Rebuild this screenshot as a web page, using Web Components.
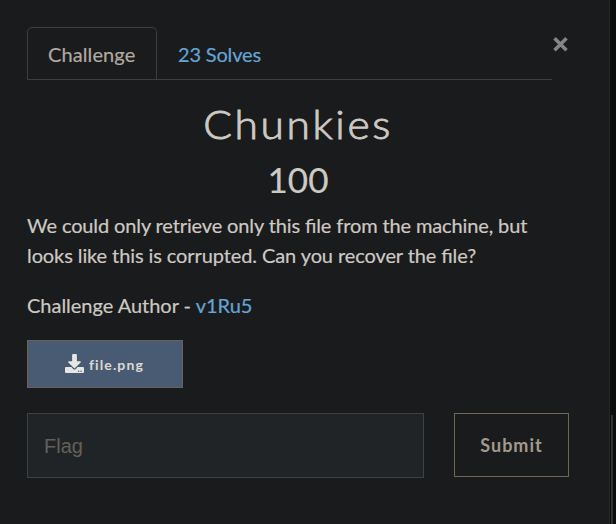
<!DOCTYPE html>
<html lang="en"><head><meta charset="utf-8"><title>Chunkies</title>
<style>html,body{margin:0;height:524px;overflow:hidden;background:#1a1b1c}</style></head><body>
<challenge-modal></challenge-modal>
<script>
function define(name, html){
  const t=document.createElement('template');t.innerHTML=html;
  customElements.define(name,class extends HTMLElement{
    constructor(){super();this.attachShadow({mode:'open'}).append(t.content.cloneNode(true));}
  });
}
define('tab-item',`<style>
:host{display:block;box-sizing:border-box;height:52px;padding:11px 20px 0;border:1px solid transparent;border-bottom:0;line-height:30px;letter-spacing:-.17px;color:#65a5d6;white-space:nowrap;-webkit-text-stroke:.2px}
:host([active]){width:130px;letter-spacing:.1px;color:#b1aaa0;border-color:#3c3e40;border-radius:5px 5px 0 0}
</style><slot></slot>`);
define('tab-bar',`<style>
:host{display:flex;box-sizing:border-box;width:525px;height:53px;border-bottom:1px solid #3c3e40}
</style><slot></slot>`);
define('close-button',`<style>:host{display:block;width:17px;height:53px}svg{display:block;margin-top:9px}</style>
<svg width="17" height="17" viewBox="0 0 17 17"><path d="M2.500 2.200 14.500 14.200M14.500 2.200 2.500 14.200" stroke="#858585" stroke-width="3.600"/></svg>`);
define('file-button',`<style>
:host{display:flex;box-sizing:border-box;width:156px;height:48px;margin-top:20px;border:1px solid #6b6255;background:#495b73;color:#dcd9d4;padding-left:37px;align-items:center;font:700 14px/20px Lato,sans-serif;letter-spacing:1.1px}
svg{margin:-2px 5px 0 0;flex:none}span{padding-top:2px}
</style><svg width="19" height="19" viewBox="0 0 512 512"><path fill="#e8e6e3" d="M216 0h80c13.300 0 24 10.700 24 24v168h87.700c17.800 0 26.700 21.500 14.100 34.100L269.700 378.300c-7.500 7.500-19.800 7.500-27.300 0L90.100 226.100c-12.600-12.600-3.700-34.100 14.100-34.100H192V24c0-13.300 10.700-24 24-24zm296 376v112c0 13.300-10.700 24-24 24H24c-13.300 0-24-10.700-24-24V376c0-13.300 10.700-24 24-24h146.700l49 49c20.100 20.100 52.500 20.100 72.600 0l49-49H488c13.300 0 24 10.700 24 24zm-124 88c0-11-9-20-20-20s-20 9-20 20 9 20 20 20 20-9 20-20zm64 0c0-11-9-20-20-20s-20 9-20 20 9 20 20 20 20-9 20-20z"/></svg><span><slot></slot></span>`);
define('flag-field',`<style>
:host{display:flex;box-sizing:border-box;width:397px;height:65px;padding:0 16px;border:1px solid #3c4144;background:#202426;align-items:center;color:#64605a;font:20px/30px "Liberation Sans",sans-serif}
</style><slot></slot>`);
define('submit-button',`<style>
:host{display:flex;box-sizing:border-box;width:115px;height:64px;border:1px solid #706655;align-items:center;justify-content:center;color:#a39a8c;font:700 18px/30px Lato,sans-serif;letter-spacing:1px}
</style><slot></slot>`);
define('scroll-track',`<style>
:host{display:block;box-sizing:border-box;width:7px;height:524px;padding:415px 0 0 1px;background:#0c0d0d;border-left:1px solid #242627}
div{height:109px;width:2px;background:#303233}
</style><div></div>`);
define('challenge-modal',`<style>
:host{display:flex;justify-content:space-between;height:524px;background:#1a1b1c;font:20px/30px Lato,sans-serif;color:#cdc9c3}
main{width:542px;padding:27px 0 0 27px}
header,footer{display:flex}
h2,h3,p{margin:0;font-weight:400}
h2{font-size:39px;font-weight:300;-webkit-text-stroke:.9px;line-height:48px;letter-spacing:2.400px;margin-top:20px;text-align:center;transform:scaleX(1.090)}
h3{font-size:35px;line-height:42px;margin:10px 0 10px;text-align:center;-webkit-text-stroke:.2px}
p{font-feature-settings:"liga" 1;letter-spacing:-.125px;white-space:nowrap;-webkit-text-stroke:.2px}
span{letter-spacing:-.095px}
p+p{margin-top:20px;letter-spacing:-.02px}a{color:#65a5d6}
footer{margin-top:25px;justify-content:space-between;align-items:flex-start}
</style><main>
<header><tab-bar><tab-item active>Challenge</tab-item><tab-item>23 Solves</tab-item></tab-bar><close-button></close-button></header>
<h2>Chunkies</h2><h3>100</h3>
<p>We could only retrieve only this file from the machine, but<br><span>looks like this is corrupted. Can you recover the file?</span></p>
<p>Challenge Author - <a>v1Ru5</a></p>
<file-button>file.png</file-button>
<footer><flag-field>Flag</flag-field><submit-button>Submit</submit-button></footer>
</main><scroll-track></scroll-track>`);
</script></body></html>
